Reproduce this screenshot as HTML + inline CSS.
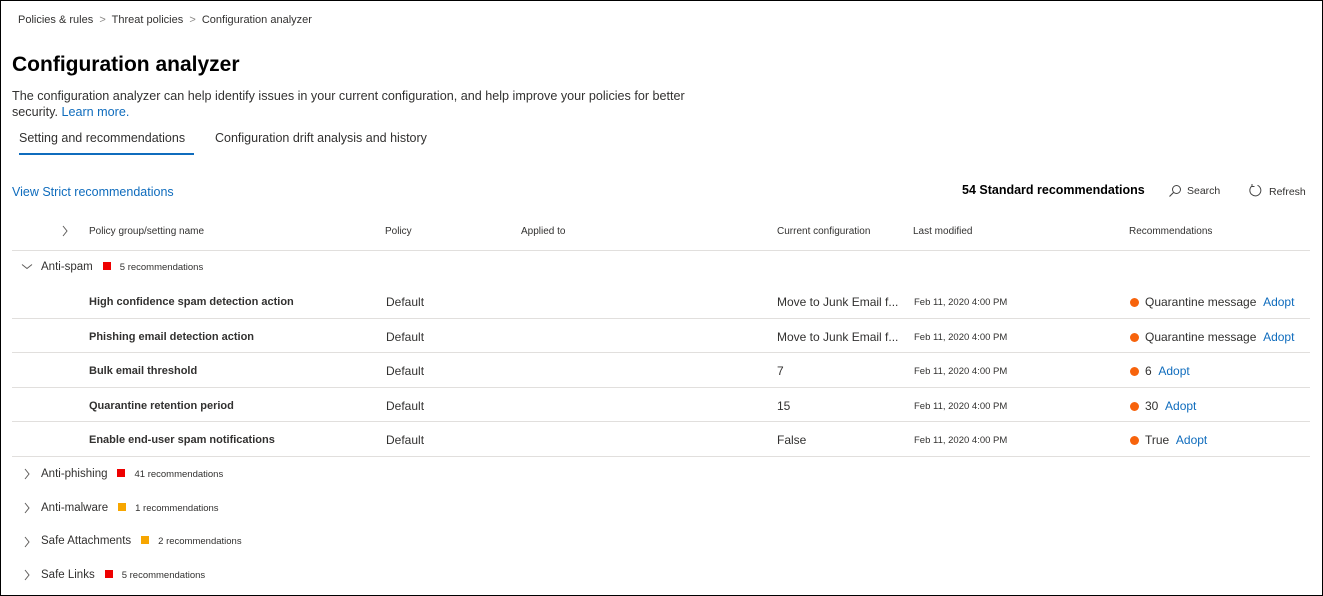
<!DOCTYPE html>
<html><head><meta charset="utf-8"><style>
*{margin:0;padding:0;box-sizing:border-box}
body{width:1323px;height:596px;overflow:hidden;background:#fff;font-family:"Liberation Sans",sans-serif;color:#323130;position:relative}
.frame{position:absolute;left:0;top:0;width:1323px;height:596px;border:1px solid #000}
.a{position:absolute;white-space:nowrap}
.link{color:#0f6cbd}
.hr{position:absolute;left:12px;width:1298px;height:1px;background:#e1dfdd}
.sq{display:inline-block;width:8px;height:8px;margin:0 9px 0 10px;vertical-align:0}
.dot{display:inline-block;width:9px;height:9px;border-radius:50%;background:#f7630c;margin-right:6px;vertical-align:-1px}
.b{font-weight:bold;font-size:11px}
.c{font-size:12px}
.d{font-size:9.5px}
.h{font-size:10px}
.g{font-size:11.5px}
svg.ch{position:absolute}
</style></head><body>
<div class="frame"></div>
<div class="a" style="left:18px;top:14px;font-size:11px">Policies &amp; rules &nbsp;<span style="color:#8a8886">&gt;</span>&nbsp; Threat policies &nbsp;<span style="color:#8a8886">&gt;</span>&nbsp; Configuration analyzer</div>
<div class="a" style="left:12px;top:53px;font-size:21px;font-weight:bold;color:#000">Configuration analyzer</div>
<div class="a" style="left:12px;top:88px;font-size:12.6px;line-height:16px">The configuration analyzer can help identify issues in your current configuration, and help improve your policies for better<br>security. <span class="link">Learn more.</span></div>
<div class="a" style="left:19px;top:131px;font-size:12.5px">Setting and recommendations</div>
<div class="a" style="left:19px;top:153px;width:175px;height:2px;background:#0f6cbd"></div>
<div class="a" style="left:215px;top:131px;font-size:12.5px">Configuration drift analysis and history</div>
<div class="a link" style="left:12px;top:185px;font-size:12.5px">View Strict recommendations</div>
<div class="a" style="left:962px;top:183px;font-size:12.5px;font-weight:bold;color:#000">54 Standard recommendations</div>
<svg class="a" style="left:1168px;top:184px" width="14" height="14" viewBox="0 0 14 14"><circle cx="8.5" cy="5.5" r="4" fill="none" stroke="#444" stroke-width="1"/><path d="M5.6 8.4 1.5 12.5" stroke="#444" stroke-width="1.1"/></svg>
<div class="a" style="left:1187px;top:185px;font-size:10.5px">Search</div>
<svg class="a" style="left:1248px;top:183px" width="15" height="15" viewBox="0 0 15 15"><path d="M9.5 2.3A5.5 5.5 0 1 1 4 3" fill="none" stroke="#444" stroke-width="1"/><path d="M4 1v2.5h2.5" fill="none" stroke="#444" stroke-width="1"/></svg>
<div class="a" style="left:1269px;top:186px;font-size:10.5px">Refresh</div>
<svg class="ch" style="left:61px;top:225px" width="8" height="12"><path d="M2 1l4 5-4 5" fill="none" stroke="#605e5c" stroke-width="1"/></svg>
<div class="a h" style="left:89px;top:226px">Policy group/setting name</div>
<div class="a h" style="left:385px;top:226px">Policy</div>
<div class="a h" style="left:521px;top:226px">Applied to</div>
<div class="a h" style="left:777px;top:226px">Current configuration</div>
<div class="a h" style="left:913px;top:226px">Last modified</div>
<div class="a h" style="left:1129px;top:226px">Recommendations</div>
<div class="hr" style="top:250px"></div>
<svg class="ch" style="left:21px;top:263px" width="12" height="8"><path d="M1 1.5l5 4 5-4" fill="none" stroke="#605e5c" stroke-width="1"/></svg>
<div class="a g" style="left:41px;top:261px">Anti-spam<span class="sq" style="background:#e00"></span><span class="d">5 recommendations</span></div>

<div class="a b" style="left:89px;top:296px">High confidence spam detection action</div>
<div class="a c" style="left:386px;top:295px">Default</div>
<div class="a c" style="left:777px;top:295px">Move to Junk Email f...</div>
<div class="a d" style="left:914px;top:297px">Feb 11, 2020 4:00 PM</div>
<div class="a c" style="left:1130px;top:295px"><span class="dot"></span>Quarantine message &nbsp;<span class="link">Adopt</span></div>
<div class="hr" style="top:318px"></div>

<div class="a b" style="left:89px;top:331px">Phishing email detection action</div>
<div class="a c" style="left:386px;top:330px">Default</div>
<div class="a c" style="left:777px;top:330px">Move to Junk Email f...</div>
<div class="a d" style="left:914px;top:332px">Feb 11, 2020 4:00 PM</div>
<div class="a c" style="left:1130px;top:330px"><span class="dot"></span>Quarantine message &nbsp;<span class="link">Adopt</span></div>
<div class="hr" style="top:352px"></div>

<div class="a b" style="left:89px;top:365px">Bulk email threshold</div>
<div class="a c" style="left:386px;top:364px">Default</div>
<div class="a c" style="left:777px;top:364px">7</div>
<div class="a d" style="left:914px;top:366px">Feb 11, 2020 4:00 PM</div>
<div class="a c" style="left:1130px;top:364px"><span class="dot"></span>6 &nbsp;<span class="link">Adopt</span></div>
<div class="hr" style="top:387px"></div>

<div class="a b" style="left:89px;top:400px">Quarantine retention period</div>
<div class="a c" style="left:386px;top:399px">Default</div>
<div class="a c" style="left:777px;top:399px">15</div>
<div class="a d" style="left:914px;top:401px">Feb 11, 2020 4:00 PM</div>
<div class="a c" style="left:1130px;top:399px"><span class="dot"></span>30 &nbsp;<span class="link">Adopt</span></div>
<div class="hr" style="top:421px"></div>

<div class="a b" style="left:89px;top:434px">Enable end-user spam notifications</div>
<div class="a c" style="left:386px;top:433px">Default</div>
<div class="a c" style="left:777px;top:433px">False</div>
<div class="a d" style="left:914px;top:435px">Feb 11, 2020 4:00 PM</div>
<div class="a c" style="left:1130px;top:433px"><span class="dot"></span>True &nbsp;<span class="link">Adopt</span></div>
<div class="hr" style="top:456px"></div>

<svg class="ch" style="left:23px;top:468px" width="8" height="12"><path d="M2 1l4 5-4 5" fill="none" stroke="#605e5c" stroke-width="1"/></svg>
<div class="a g" style="left:41px;top:468px">Anti-phishing<span class="sq" style="background:#e00"></span><span class="d">41 recommendations</span></div>
<svg class="ch" style="left:23px;top:502px" width="8" height="12"><path d="M2 1l4 5-4 5" fill="none" stroke="#605e5c" stroke-width="1"/></svg>
<div class="a g" style="left:41px;top:502px">Anti-malware<span class="sq" style="background:#f7a600"></span><span class="d">1 recommendations</span></div>
<svg class="ch" style="left:23px;top:536px" width="8" height="12"><path d="M2 1l4 5-4 5" fill="none" stroke="#605e5c" stroke-width="1"/></svg>
<div class="a g" style="left:41px;top:535px">Safe Attachments<span class="sq" style="background:#f7a600"></span><span class="d">2 recommendations</span></div>
<svg class="ch" style="left:23px;top:569px" width="8" height="12"><path d="M2 1l4 5-4 5" fill="none" stroke="#605e5c" stroke-width="1"/></svg>
<div class="a g" style="left:41px;top:569px">Safe Links<span class="sq" style="background:#e00"></span><span class="d">5 recommendations</span></div>
</body></html>
